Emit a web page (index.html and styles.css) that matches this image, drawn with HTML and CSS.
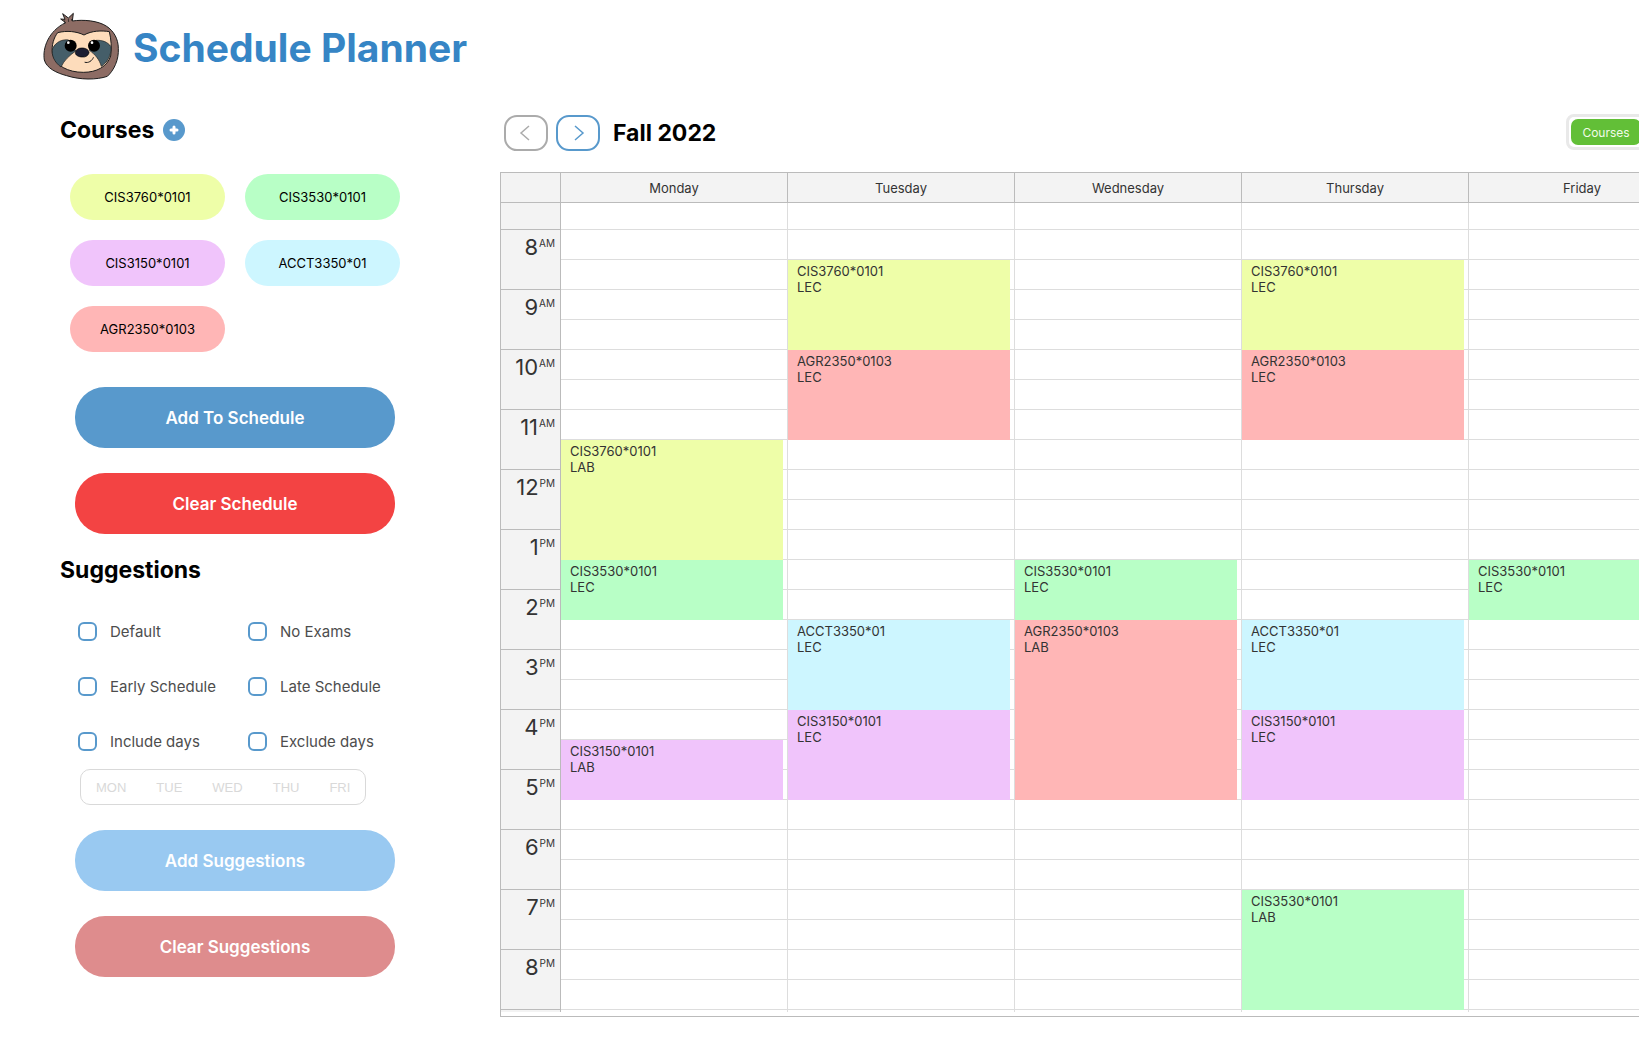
FILE: index.html
```html
<!DOCTYPE html>
<html lang="en">
<head>
<meta charset="utf-8">
<title>Schedule Planner</title>
<link rel="stylesheet" href="styles.css">
</head>
<body>
<header class="site-header">
  <svg class="logo" viewBox="39 33 231 210" aria-hidden="true">
    <path d="M107 68 L92 57 L105 58 L98 41 L115 54 L130 40 L127 63 C160 58 205 62 230 79 C250 92 265 116 265 145 C267 180 251 212 232 229 C200 240 150 240 110 227 C80 219 50 205 43 180 C37 145 55 93 107 68Z" fill="#8d6c64" stroke="#1c1c1c" stroke-width="3" stroke-linejoin="round"/>
    <path d="M104 72 L104 61 M116 66 L115 57 M126 63 L124 57" fill="none" stroke="#1c1c1c" stroke-width="2"/>
    <path d="M83 98 C110 91 140 94 162 105 C185 92 215 91 238 95 C243 115 246 145 242 168 C232 200 200 217 160 217 C115 217 75 198 67 160 C64 135 72 112 83 98Z" fill="#fddcbb" stroke="#1c1c1c" stroke-width="3"/>
    <path d="M68 145 C78 126 96 117 116 120 L137 153 C118 167 103 180 93 201 C73 187 63 165 68 145Z" fill="#455e69" stroke="#1c1c1c" stroke-width="2"/>
    <path d="M243 140 C233 126 218 120 198 121 L178 151 C195 163 208 178 214 199 C232 187 244 168 243 140Z" fill="#455e69" stroke="#1c1c1c" stroke-width="2"/>
    <circle cx="122" cy="137" r="18"/>
    <circle cx="192" cy="137" r="18"/>
    <circle cx="115" cy="128" r="4" fill="#fff"/>
    <circle cx="186" cy="128" r="4" fill="#fff"/>
    <path d="M156 144 C170 144 178 152 177 159 C174 168 166 172 157 171 C145 171 136 165 136 158 C137 149 145 144 156 144Z" fill="#1b1d31" stroke="#000" stroke-width="2"/>
    <path d="M165 187 C175 190 186 183 190 173" fill="none" stroke="#1c1c1c" stroke-width="3" stroke-linecap="round"/>
  </svg>
  <h1 class="site-title">Schedule Planner</h1>
</header>

<div class="planner">
  <aside class="sidebar">
    <section>
      <div class="heading-row">
        <h2 class="heading">Courses</h2>
        <button class="add-course" type="button" aria-label="Add course">
          <svg viewBox="0 0 22 22" aria-hidden="true"><path d="M11 8v6M8 11h6" stroke="#fff" stroke-width="3" stroke-linecap="round"/></svg>
        </button>
      </div>
      <div class="courses">
        <button type="button" class="course yellow">CIS3760*0101</button>
        <button type="button" class="course green">CIS3530*0101</button>
        <button type="button" class="course purple">CIS3150*0101</button>
        <button type="button" class="course cyan">ACCT3350*01</button>
        <button type="button" class="course salmon">AGR2350*0103</button>
      </div>
      <div class="actions">
        <button type="button" class="action add">Add To Schedule</button>
        <button type="button" class="action clear">Clear Schedule</button>
      </div>
    </section>
    <section class="suggestions">
      <h2 class="heading">Suggestions</h2>
      <div class="options">
        <label class="option"><input type="checkbox" class="tick">Default</label>
        <label class="option"><input type="checkbox" class="tick">No Exams</label>
        <label class="option"><input type="checkbox" class="tick">Early Schedule</label>
        <label class="option"><input type="checkbox" class="tick">Late Schedule</label>
        <label class="option"><input type="checkbox" class="tick">Include days</label>
        <label class="option"><input type="checkbox" class="tick">Exclude days</label>
      </div>
      <div class="days">
        <button type="button" class="day" disabled>MON</button>
        <button type="button" class="day" disabled>TUE</button>
        <button type="button" class="day" disabled>WED</button>
        <button type="button" class="day" disabled>THU</button>
        <button type="button" class="day" disabled>FRI</button>
      </div>
      <div class="actions">
        <button type="button" class="action add-off" disabled>Add Suggestions</button>
        <button type="button" class="action clear-off" disabled>Clear Suggestions</button>
      </div>
    </section>
  </aside>

  <main class="schedule">
    <div class="toolbar">
      <div class="term">
        <button type="button" class="step" disabled aria-label="Previous term">
          <svg viewBox="0 0 16 16" aria-hidden="true"><path d="M11 1 L3 8 L11 15"/></svg>
        </button>
        <button type="button" class="step next" aria-label="Next term">
          <svg viewBox="0 0 16 16" aria-hidden="true"><path d="M5 1 L13 8 L5 15"/></svg>
        </button>
        <h2 class="heading term-name">Fall 2022</h2>
      </div>
      <div class="toggle">
        <button type="button" class="toggle-on">Courses</button>
      </div>
    </div>

    <div class="calendar">
      <table class="week">
        <thead>
          <tr><th class="hours"></th><th>Monday</th><th>Tuesday</th><th>Wednesday</th><th>Thursday</th><th>Friday</th></tr>
        </thead>
        <tbody>
          <tr class="first"><th></th><td></td><td></td><td></td><td></td><td></td></tr>
          <tr><th rowspan="2"><span class="hour">8<small>AM</small></span></th><td></td><td></td><td></td><td></td><td></td></tr>
          <tr><td></td><td class="busy"><div class="event slots-3 yellow">CIS3760*0101<br>LEC</div></td><td></td><td class="busy"><div class="event slots-3 yellow">CIS3760*0101<br>LEC</div></td><td></td></tr>
          <tr><th rowspan="2"><span class="hour">9<small>AM</small></span></th><td></td><td></td><td></td><td></td><td></td></tr>
          <tr><td></td><td></td><td></td><td></td><td></td></tr>
          <tr><th rowspan="2"><span class="hour">10<small>AM</small></span></th><td></td><td class="busy"><div class="event slots-3 salmon">AGR2350*0103<br>LEC</div></td><td></td><td class="busy"><div class="event slots-3 salmon">AGR2350*0103<br>LEC</div></td><td></td></tr>
          <tr><td></td><td></td><td></td><td></td><td></td></tr>
          <tr><th rowspan="2"><span class="hour">11<small>AM</small></span></th><td></td><td></td><td></td><td></td><td></td></tr>
          <tr><td class="busy"><div class="event slots-4 yellow">CIS3760*0101<br>LAB</div></td><td></td><td></td><td></td><td></td></tr>
          <tr><th rowspan="2"><span class="hour">12<small>PM</small></span></th><td></td><td></td><td></td><td></td><td></td></tr>
          <tr><td></td><td></td><td></td><td></td><td></td></tr>
          <tr><th rowspan="2"><span class="hour">1<small>PM</small></span></th><td></td><td></td><td></td><td></td><td></td></tr>
          <tr><td class="busy"><div class="event slots-2 green">CIS3530*0101<br>LEC</div></td><td></td><td class="busy"><div class="event slots-2 green">CIS3530*0101<br>LEC</div></td><td></td><td class="busy"><div class="event slots-2 green">CIS3530*0101<br>LEC</div></td></tr>
          <tr><th rowspan="2"><span class="hour">2<small>PM</small></span></th><td></td><td></td><td></td><td></td><td></td></tr>
          <tr><td></td><td class="busy"><div class="event slots-3 cyan">ACCT3350*01<br>LEC</div></td><td class="busy"><div class="event slots-6 salmon">AGR2350*0103<br>LAB</div></td><td class="busy"><div class="event slots-3 cyan">ACCT3350*01<br>LEC</div></td><td></td></tr>
          <tr><th rowspan="2"><span class="hour">3<small>PM</small></span></th><td></td><td></td><td></td><td></td><td></td></tr>
          <tr><td></td><td></td><td></td><td></td><td></td></tr>
          <tr><th rowspan="2"><span class="hour">4<small>PM</small></span></th><td></td><td class="busy"><div class="event slots-3 purple">CIS3150*0101<br>LEC</div></td><td></td><td class="busy"><div class="event slots-3 purple">CIS3150*0101<br>LEC</div></td><td></td></tr>
          <tr><td class="busy"><div class="event slots-2 purple">CIS3150*0101<br>LAB</div></td><td></td><td></td><td></td><td></td></tr>
          <tr><th rowspan="2"><span class="hour">5<small>PM</small></span></th><td></td><td></td><td></td><td></td><td></td></tr>
          <tr><td></td><td></td><td></td><td></td><td></td></tr>
          <tr><th rowspan="2"><span class="hour">6<small>PM</small></span></th><td></td><td></td><td></td><td></td><td></td></tr>
          <tr><td></td><td></td><td></td><td></td><td></td></tr>
          <tr><th rowspan="2"><span class="hour">7<small>PM</small></span></th><td></td><td></td><td></td><td class="busy"><div class="event slots-4 green">CIS3530*0101<br>LAB</div></td><td></td></tr>
          <tr><td></td><td></td><td></td><td></td><td></td></tr>
          <tr><th rowspan="2"><span class="hour">8<small>PM</small></span></th><td></td><td></td><td></td><td></td><td></td></tr>
          <tr><td></td><td></td><td></td><td></td><td></td></tr>
          <tr class="last"><th></th><td></td><td></td><td></td><td></td><td></td></tr>
        </tbody>
      </table>
    </div>
  </main>
</div>
</body>
</html>
```

FILE: styles.css
```css
* { box-sizing: border-box; }

body {
  margin: 0;
  background: #fff;
  color: #000;
  font-family: Inter, "Liberation Sans", sans-serif;
  font-size: 13px;
  font-variant-ligatures: no-contextual;
  overflow-x: hidden;
}

h1, h2 { margin: 0; }

button {
  font-family: inherit;
  font-variant-ligatures: inherit;
  border: 0;
  padding: 0;
  margin: 0;
  background: none;
  cursor: pointer;
}

button:disabled { cursor: default; }

.site-header {
  display: flex;
  align-items: center;
  gap: 13px;
  padding: 11px 43px 0;
}

.logo { width: 77px; height: 70px; }

.site-title {
  padding-top: 4px;
  color: #3685c5;
  font-size: 39px;
  line-height: 48px;
  font-weight: 700;
}

.planner {
  display: flex;
  align-items: flex-start;
  padding-top: 33px;
}

/* Sidebar */
.sidebar {
  flex: 0 0 500px;
  padding: 2px 60px 40px;
}

.heading-row { display: flex; align-items: center; gap: 9px; }

.heading {
  font-size: 23px;
  line-height: 28px;
  font-weight: 700;
}

.add-course {
  width: 22px;
  height: 22px;
  border-radius: 50%;
  background: #5899cc;
}

.add-course svg { display: block; }

.courses {
  display: grid;
  grid-template-columns: 155px 155px;
  gap: 20px;
  margin: 30px 10px 35px;
}

.course {
  height: 46px;
  border-radius: 23px;
  color: #000;
  font-size: 13px;
}

.yellow { background: #eefea8; }
.green { background: #b8ffc6; }
.purple { background: #f0c4fb; }
.cyan { background: #cdf6ff; }
.salmon { background: #ffb6b6; }

.actions {
  display: grid;
  gap: 25px;
  width: 320px;
  margin-left: 15px;
}

.action {
  height: 61px;
  border-radius: 30px;
  color: #fff;
  font-size: 17px;
  font-weight: 600;
}

.add { background: #5899cc; }
.clear { background: #f34343; }
.add-off { background: #99c9f1; }
.clear-off { background: #de8c8d; }

.suggestions { margin-top: 22px; }

.options {
  display: grid;
  grid-template-columns: 170px 170px;
  row-gap: 36px;
  margin: 38px 0 18px 18px;
}

.option {
  display: flex;
  align-items: center;
  gap: 13px;
  height: 19px;
  color: #4d4d4d;
  font-size: 15px;
}

.tick {
  appearance: none;
  width: 19px;
  height: 19px;
  margin: 0;
  border: 2px solid #5899cc;
  border-radius: 6px;
  background: #fff;
}

.tick:checked { background: #5899cc; }

.days {
  display: flex;
  width: max-content;
  height: 36px;
  margin: 0 0 25px 20px;
  border: 1px solid #d9d9d9;
  border-radius: 10px;
}

.day {
  padding: 0 15px;
  color: #d9d9d9;
  font-family: "Liberation Sans", Arial, sans-serif;
  font-size: 13px;
}

/* Schedule */
.schedule { flex: 1 0 1197px; }

.toolbar {
  display: flex;
  justify-content: space-between;
  align-items: flex-start;
  margin-bottom: 21px;
}

.term { display: flex; align-items: center; gap: 8px; padding: 1px 0 0 4px; }

.step {
  display: flex;
  align-items: center;
  justify-content: center;
  width: 44px;
  height: 36px;
  border: 2px solid #ababab;
  border-radius: 13px;
  color: #ababab;
}

.step.next { border-color: #5899cc; color: #5899cc; }

.step svg {
  width: 16px;
  height: 16px;
  fill: none;
  stroke: currentColor;
  stroke-width: 1.5;
}

.term-name { margin-left: 5px; }

.toggle {
  width: 131px;
  height: 36px;
  padding: 2px;
  border: 3px solid #e9e9e9;
  border-radius: 8px;
}

.toggle-on {
  display: block;
  width: 70px;
  height: 26px;
  border-radius: 7px;
  background: #62bf37;
  color: #f1fbe9;
  font-size: 12px;
}

.calendar {
  border: 1px solid #bbb;
  padding-bottom: 4px;
}

.week {
  width: 100%;
  border-spacing: 0;
  table-layout: fixed;
  color: #333;
}

.week th,
.week td {
  height: 30px;
  padding: 0;
  border: 0 solid #ddd;
  border-width: 0 1px 1px 0;
}

.week th {
  border-color: #bbb;
  background: #f3f3f3;
  font-size: 13px;
  font-weight: 400;
}

.week .hours { width: 60px; }
.week tbody th { vertical-align: top; }
.week .first th, .week .first td { height: 27px; }
.week .last th, .week .last td { height: 2px; border-bottom-width: 0; }

.hour {
  display: flex;
  justify-content: flex-end;
  gap: 1px;
  padding: 4px 5px 0 0;
  font-size: 22px;
  line-height: 26px;
}

.hour small { font-size: 10px; line-height: 18px; }

.week .busy { position: relative; }

.event {
  position: absolute;
  top: 0;
  left: 0;
  right: 4px;
  padding: 3px 9px;
  font-size: 13px;
  line-height: 16px;
}

.slots-2 { height: 60px; }
.slots-3 { height: 90px; }
.slots-4 { height: 120px; }
.slots-6 { height: 180px; }
```
